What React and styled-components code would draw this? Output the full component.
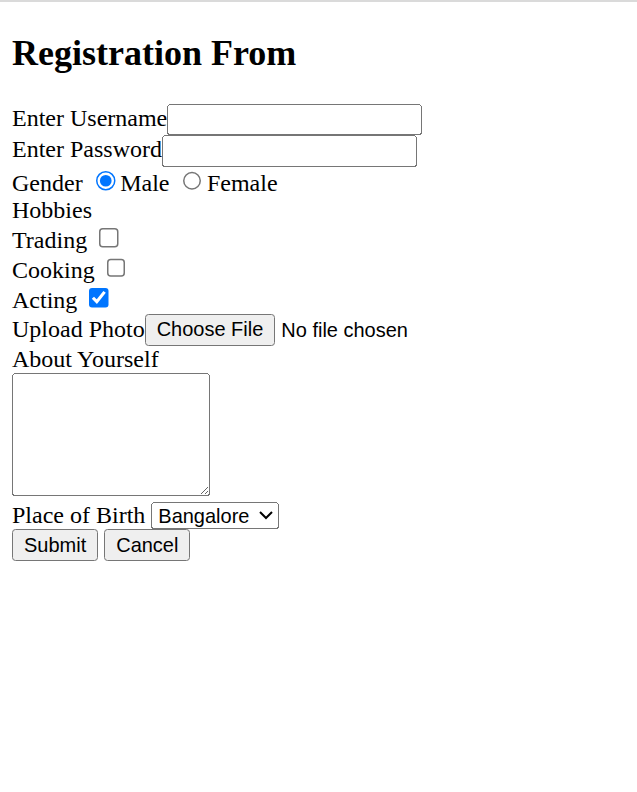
import { createGlobalStyle } from 'styled-components'
import styled from 'styled-components'

const Global = createGlobalStyle`
    html {
        border-top: 2px solid #dadada;
    }
    body {
        margin: 0;
        background: #ffffff;
        color: #000000;
        font-family: "Liberation Serif", "Times New Roman", serif;
        font-size: 16px;
    }
`

export default function App() {
    return (
        <>
            <Global />
            <Pagina>
                <Titulo>Registration From</Titulo>
                <Formulario onSubmit={(e) => e.preventDefault()}>
                    <Linha>Enter Username<CampoTexto type="text" name="usuario" /></Linha>
                    <Linha>Enter Password<CampoTexto type="password" name="senha" /></Linha>
                    <Linha>
                        Gender <Radio type="radio" name="genero" value="m" defaultChecked />Male{' '}
                        <Radio type="radio" name="genero" value="f" />Female
                    </Linha>
                    <Linha>Hobbies</Linha>
                    <Linha>Trading <Caixa type="checkbox" name="trading" /></Linha>
                    <Linha>Cooking <Caixa type="checkbox" name="cooking" /></Linha>
                    <Linha>Acting <Caixa type="checkbox" name="acting" defaultChecked /></Linha>
                    <Linha>Upload Photo<Arquivo type="file" name="foto" /></Linha>
                    <Linha>About Yourself</Linha>
                    <Linha><AreaTexto name="sobre" /></Linha>
                    <Linha>
                        Place of Birth{' '}
                        <Selecao name="local" defaultValue="Bangalore">
                            <option>Bangalore</option>
                            <option>Mysore</option>
                            <option>Chennai</option>
                        </Selecao>
                    </Linha>
                    <Linha>
                        <Botao type="submit" value="Submit" /> <Botao type="reset" value="Cancel" />
                    </Linha>
                </Formulario>
            </Pagina>
        </>
    )
}

const Pagina = styled.div`
    zoom: 1.5;
    padding: 0 8px 8px;
`

const Titulo = styled.h1`
    font-size: 24px;
    font-weight: bold;
    margin: 0.83em 0;
`

const Formulario = styled.form`
    display: block;
    margin: 0;
`

const Linha = styled.div`
    display: block;
`

const controle = `
    font-family: "Liberation Sans", Arial, sans-serif;
    font-size: 13.333px;
`

const CampoTexto = styled.input`
    ${controle}
    width: 170px;
    height: 21px;
    box-sizing: border-box;
    padding: 1px 2px;
    margin: 0;
`

const Radio = styled.input`
    margin: 3px 3px 0 5px;
`

const Caixa = styled.input`
    margin: 3px 3px 3px 4px;
`

const Arquivo = styled.input`
    ${controle}
    margin: 0;
`

const AreaTexto = styled.textarea`
    font-family: "Liberation Mono", monospace;
    font-size: 13.333px;
    width: 132px;
    height: 82px;
    box-sizing: border-box;
    padding: 2px;
    margin: 0;
`

const Selecao = styled.select`
    ${controle}
    width: 85px;
    height: 18px;
    box-sizing: border-box;
    margin: 0;
`

const Botao = styled.input`
    ${controle}
    margin: 0;
`
